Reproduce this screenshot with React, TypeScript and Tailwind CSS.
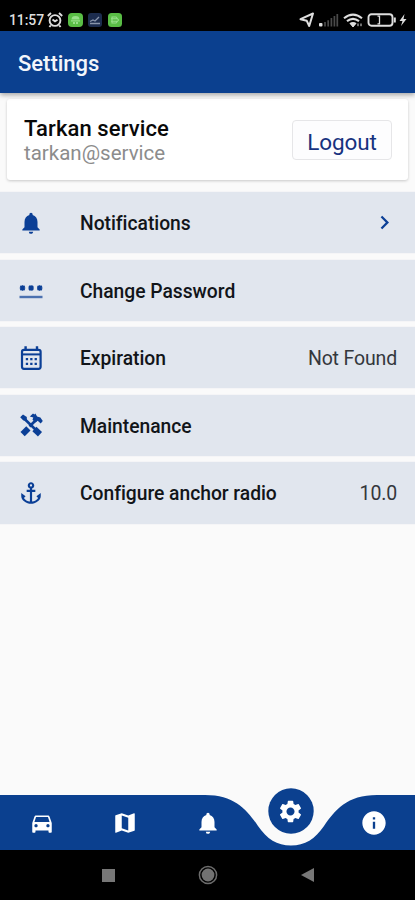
import React from "react";
import {
  MdAnchor, MdChevronRight, MdDirectionsCar, MdInfo, MdMap,
  MdNotifications, MdSettings,
} from "react-icons/md";

type IconProps = { className?: string };

function CalendarIcon({ className }: IconProps) {
  return (
    <svg className={className} viewBox="0 0 26 26" fill="none" stroke="currentColor">
      <rect x="4" y="4.8" width="18.6" height="19" rx="2" strokeWidth="2.2" />
      <path d="M4 9.4h18.6" strokeWidth="2" />
      <path d="M7.6 1.2v4M19 1.2v4" strokeWidth="2.4" />
      <path d="M7.8 14.2h2.3M12.2 14.2h2.3M16.6 14.2h2.3M7.8 18.8h2.3M12.2 18.8h2.3M16.6 18.8h2.3" strokeWidth="2.2" />
    </svg>
  );
}

function ToolsIcon({ className }: IconProps) {
  return (
    <svg className={className} viewBox="0 0 26 26" fill="none" stroke="currentColor">
      <path d="M4 4.5 18 18" strokeWidth="2.6" />
      <path d="M2.2 5.2 5 2.4 8.8 5 8.8 8.4 5.4 8.4z" fill="currentColor" stroke="none" />
      <path d="M16.4 17 22 22.2" strokeWidth="6" />
      <path d="M18 8 11.5 14.5" strokeWidth="2.6" />
      <path d="M10.4 16.4 4.6 22.2" strokeWidth="6" />
      <path d="M11.8 4.6 15 1.4l1.4 1.2L17.4 1.4l1.7 3 3.3 1.2 2.4 3.4-2.1 2.4-3-2.6-2.2 1.8-3-2.8.8-2.2z" fill="currentColor" stroke="none" />
    </svg>
  );
}

function PasswordIcon({ className }: IconProps) {
  return (
    <svg className={className} viewBox="0 0 26 26" fill="none" stroke="currentColor">
      <path d="M1.5 20h23" strokeWidth="2.4" opacity="0.7" />
      <path d="M1.8 11h5.4M4.5 8.2v5.6M2.4 8.9l4.2 4.2M6.6 8.9l-4.2 4.2M10.4 11h5.4M13.1 8.2v5.6M11 8.9l4.2 4.2M15.2 8.9L11 13.1M19 11h5.4M21.7 8.2v5.6M19.6 8.9l4.2 4.2M23.8 8.9l-4.2 4.2" strokeWidth="1.5" />
    </svg>
  );
}

function StatusBar() {
  return (
    <div className="flex h-[31px] shrink-0 items-center bg-black pt-[9px] pl-[9px] pr-[8px] text-[#dedede]">
      <span className="w-[35px] whitespace-nowrap text-[14px] font-medium leading-[20px] tracking-[-0.1px]">11:57</span>
      <svg className="ml-[3px] h-[16px] w-[16px]" viewBox="0 0 16 16" fill="none" stroke="currentColor" strokeWidth="1.9">
        <circle cx="8" cy="8.5" r="5.4" />
        <path d="M.8 4 4 1M12 1l3.2 3M3.8 13.3 2.4 15M12.2 13.3l1.4 1.7M5.5 7.5 8 9.3l2.5-1.6" />
      </svg>
      <svg className="ml-[5px] h-[14px] w-[15px]" viewBox="0 0 15 14">
        <rect width="15" height="14" rx="4" fill="#59bd45" />
        <path d="M3.5 6.5a4 3.4 0 0 1 8 0z M3 7.2h9v1.3H3z M5 9h2v2H5z M8 9h2v2H8z" fill="#98df8b" />
      </svg>
      <svg className="ml-[5px] h-[14px] w-[14px]" viewBox="0 0 14 14">
        <rect width="14" height="14" rx="3" fill="#1c2c4e" />
        <path d="M2 8.5 5 7l2 1 4-4M2 10.5h10" stroke="#8995ab" strokeWidth="1.3" fill="none" />
      </svg>
      <svg className="ml-[6px] h-[14px] w-[14px]" viewBox="0 0 14 14">
        <rect width="14" height="14" rx="3.5" fill="#59bd45" />
        <path d="M4 4h4l2.5 3L8 10H4zM3 5.8h6M3 8.2h6" stroke="#98df8b" strokeWidth="1.1" fill="none" />
      </svg>
      <svg className="ml-auto h-[16px] w-[16px]" viewBox="0 0 16 16" fill="none" stroke="currentColor" strokeWidth="2" strokeLinejoin="round">
        <path d="M1.5 7.2 14 1.5 10.2 14 7.8 8.8z" />
      </svg>
      <svg className="ml-[3px] h-[14px] w-[21px]" viewBox="0 0 21 14">
        <rect x="1" y="10" width="3.5" height="3.5" rx="1" fill="#dedede" />
        <path d="M7 9v4.5M10.2 7.2v6.3M13.4 5v8.5M16.4 3v10.5M19.3 1v12.5" stroke="#4a4a4a" strokeWidth="1.7" />
      </svg>
      <svg className="ml-[4px] h-[15px] w-[20px]" viewBox="0 0 20 15" fill="none" stroke="currentColor" strokeWidth="2.1">
        <path d="M1 5.2Q10-2 19 5.2M4 8.2q6-4.7 12 0M7 11q3-2 6 0" />
        <path d="M8 11.5h4L10 14zM15 13.2v-2.7M18 10.5v2.7" strokeWidth="1" fill="currentColor" />
      </svg>
      <svg className="ml-[4px] h-[14px] w-[29px]" viewBox="0 0 29 14" fill="none" stroke="currentColor">
        <rect x="1.5" y="1.2" width="24" height="11.6" rx="3" strokeWidth="1.9" />
        <path d="M10.5 3.2h2v7.6h-2" strokeWidth="1.3" />
        <path d="M27.8 4.5v5" strokeWidth="2" />
      </svg>
      <svg className="ml-[3px] h-[14px] w-[8px]" viewBox="0 0 8 14"><path d="M5.5 1 .5 8h3L2 13l5.5-7H4.5z" fill="currentColor" /></svg>
    </div>
  );
}

const rows = [
  { icon: MdNotifications, label: "Notifications", chevron: true },
  { icon: PasswordIcon, label: "Change Password" },
  { icon: CalendarIcon, label: "Expiration", value: "Not Found" },
  { icon: ToolsIcon, label: "Maintenance" },
  { icon: MdAnchor, label: "Configure anchor radio", value: "10.0" },
];

export default function App() {
  return (
    <div className="flex h-[900px] w-[415px] flex-col overflow-hidden bg-[#fafafa] font-['Roboto',sans-serif]">
      <StatusBar />
      <header className="z-10 flex h-[62px] shrink-0 items-center bg-[#0b408f] pl-[18px] pt-[3px] shadow-[0_2px_5px_rgba(0,0,0,0.35)]">
        <h1 className="text-[22px] font-medium leading-none text-[#f3f6fb]">Settings</h1>
      </header>
      <section className="mx-[7px] mt-[6px] flex h-[81px] shrink-0 items-center justify-between rounded-[3px] bg-white pl-[17px] pr-[16px] shadow-[0_1px_3px_rgba(0,0,0,0.2)]">
        <div className="flex flex-col pt-[2px]">
          <span className="text-[22px] font-medium leading-[24px] tracking-[0.1px] text-[#090909]">Tarkan service</span>
          <span className="text-[20.5px] leading-[24px] text-[#8c8c8c]">tarkan@service</span>
        </div>
        <button className="h-[40px] w-[100px] rounded-[4px] border border-[#e6e6e8] bg-[#fdfdfe] pt-[5px] text-[22.5px] leading-none tracking-[-0.1px] text-[#17327f]">Logout</button>
      </section>
      <main className="mt-[12px] flex flex-col gap-[6.4px]">
        {rows.map(({ icon: Icon, label, chevron, value }) => (
          <div key={label} className="flex h-[61.2px] items-center bg-[#e1e6ee] pl-[18px] pr-[18px] shadow-[0_0_1px_#d8dde5]">
            <Icon className="h-[26px] w-[26px] text-[#0b3f96]" />
            <span className="ml-[36px] pt-[2.4px] text-[19.3px] font-medium leading-none tracking-[-0.03px] text-[#121519]">{label}</span>
            {chevron && <MdChevronRight className="-mr-[1px] ml-auto h-[27px] w-[27px] text-[#0b3f96]" />}
            {value && <span className="ml-auto pt-[2.4px] text-[19.5px] leading-none tracking-[-0.15px] text-[#34373c]">{value}</span>}
          </div>
        ))}
      </main>
      <nav className="relative mt-auto h-[64px] shrink-0">
        <svg className="absolute inset-0 h-[64px] w-[415px]" viewBox="0 0 415 64">
          <path d="M0 9H205C235 9 247 24 258 40C267 53 277 59.5 291 59.5C305 59.5 315 53 324 40C335 24 347 9 377 9H415V64H0Z" fill="#0b408f" />
          <circle cx="291" cy="25" r="22.7" fill="#0b408f" />
        </svg>
        <div className="relative grid h-full grid-cols-5 justify-items-center pt-[24px] text-white">
          <MdDirectionsCar className="h-[26px] w-[26px]" />
          <MdMap className="h-[26px] w-[26px]" />
          <MdNotifications className="h-[26px] w-[26px]" />
          <MdSettings className="-mt-[12px] h-[27px] w-[27px]" />
          <MdInfo className="-mt-[1px] h-[28px] w-[28px]" />
        </div>
      </nav>
      <footer className="flex h-[50px] shrink-0 items-center justify-center gap-[83px] bg-black">
        <span className="h-[13px] w-[13px] bg-[#777]" />
        <svg className="h-[20px] w-[20px]" viewBox="0 0 20 20">
          <circle cx="10" cy="10" r="8.6" fill="none" stroke="#6d6d6d" strokeWidth="1.5" />
          <circle cx="10" cy="10" r="6.4" fill="#737373" />
        </svg>
        <svg className="h-[14px] w-[13px]" viewBox="0 0 13 14"><path d="M13 0v14L0 7z" fill="#777" /></svg>
      </footer>
    </div>
  );
}
